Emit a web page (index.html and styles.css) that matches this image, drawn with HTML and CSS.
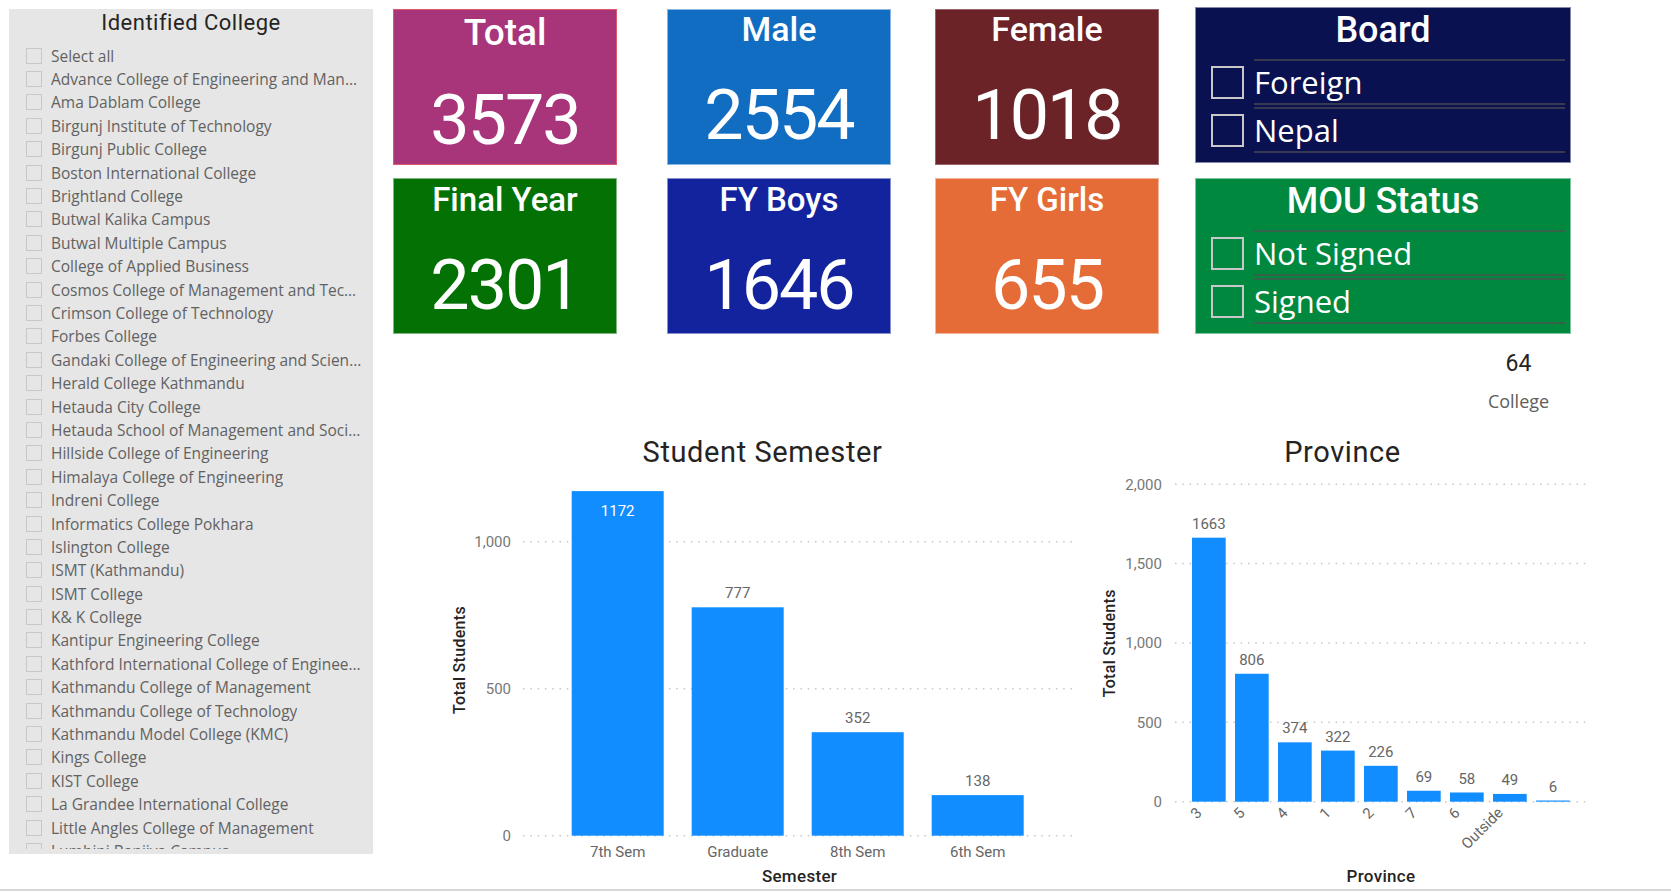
FILE: index.html
```html
<!DOCTYPE html>
<html lang="en">
<head>
    <meta charset="UTF-8">
    <meta name="viewport" content="width=device-width, initial-scale=1.0">
    <title>Student Dashboard</title>
    <link rel="stylesheet" href="styles.css">
</head>
<body>
    <div class="report">
        <!-- college slicer -->
        <aside class="college-slicer">
            <h2 class="slicer-heading">Identified College</h2>
            <ul class="college-list">
                <li><span class="box"></span><span class="name">Select all</span></li>
                <li><span class="box"></span><span class="name">Advance College of Engineering and Management</span></li>
                <li><span class="box"></span><span class="name">Ama Dablam College</span></li>
                <li><span class="box"></span><span class="name">Birgunj Institute of Technology</span></li>
                <li><span class="box"></span><span class="name">Birgunj Public College</span></li>
                <li><span class="box"></span><span class="name">Boston International College</span></li>
                <li><span class="box"></span><span class="name">Brightland College</span></li>
                <li><span class="box"></span><span class="name">Butwal Kalika Campus</span></li>
                <li><span class="box"></span><span class="name">Butwal Multiple Campus</span></li>
                <li><span class="box"></span><span class="name">College of Applied Business</span></li>
                <li><span class="box"></span><span class="name">Cosmos College of Management and Technology</span></li>
                <li><span class="box"></span><span class="name">Crimson College of Technology</span></li>
                <li><span class="box"></span><span class="name">Forbes College</span></li>
                <li><span class="box"></span><span class="name">Gandaki College of Engineering and Science</span></li>
                <li><span class="box"></span><span class="name">Herald College Kathmandu</span></li>
                <li><span class="box"></span><span class="name">Hetauda City College</span></li>
                <li><span class="box"></span><span class="name">Hetauda School of Management and Social Sciences</span></li>
                <li><span class="box"></span><span class="name">Hillside College of Engineering</span></li>
                <li><span class="box"></span><span class="name">Himalaya College of Engineering</span></li>
                <li><span class="box"></span><span class="name">Indreni College</span></li>
                <li><span class="box"></span><span class="name">Informatics College Pokhara</span></li>
                <li><span class="box"></span><span class="name">Islington College</span></li>
                <li><span class="box"></span><span class="name">ISMT (Kathmandu)</span></li>
                <li><span class="box"></span><span class="name">ISMT College</span></li>
                <li><span class="box"></span><span class="name">K&amp; K College</span></li>
                <li><span class="box"></span><span class="name">Kantipur Engineering College</span></li>
                <li><span class="box"></span><span class="name">Kathford International College of Engineering and Management</span></li>
                <li><span class="box"></span><span class="name">Kathmandu College of Management</span></li>
                <li><span class="box"></span><span class="name">Kathmandu College of Technology</span></li>
                <li><span class="box"></span><span class="name">Kathmandu Model College (KMC)</span></li>
                <li><span class="box"></span><span class="name">Kings College</span></li>
                <li><span class="box"></span><span class="name">KIST College</span></li>
                <li><span class="box"></span><span class="name">La Grandee International College</span></li>
                <li><span class="box"></span><span class="name">Little Angles College of Management</span></li>
                <li><span class="box"></span><span class="name">Lumbini Banijya Campus</span></li>
            </ul>
        </aside>

        <main class="canvas">
            <!-- cards + filters -->
            <section class="kpi-grid">
                <div class="kpi kpi-lg kpi-total">
                    <div class="kpi-title">Total</div>
                    <div class="kpi-value">3573</div>
                </div>
                <div class="kpi kpi-male">
                    <div class="kpi-title">Male</div>
                    <div class="kpi-value">2554</div>
                </div>
                <div class="kpi kpi-female">
                    <div class="kpi-title">Female</div>
                    <div class="kpi-value">1018</div>
                </div>
                <div class="filter filter-board">
                    <div class="filter-title">Board</div>
                    <div class="filter-option"><span class="filter-box"></span><span class="filter-label">Foreign</span></div>
                    <div class="filter-option"><span class="filter-box"></span><span class="filter-label">Nepal</span></div>
                </div>

                <div class="kpi kpi-sm kpi-final">
                    <div class="kpi-title">Final Year</div>
                    <div class="kpi-value">2301</div>
                </div>
                <div class="kpi kpi-sm kpi-boys">
                    <div class="kpi-title">FY Boys</div>
                    <div class="kpi-value">1646</div>
                </div>
                <div class="kpi kpi-sm kpi-girls">
                    <div class="kpi-title">FY Girls</div>
                    <div class="kpi-value">655</div>
                </div>
                <div class="filter filter-mou">
                    <div class="filter-title">MOU Status</div>
                    <div class="filter-option"><span class="filter-box"></span><span class="filter-label">Not Signed</span></div>
                    <div class="filter-option"><span class="filter-box"></span><span class="filter-label">Signed</span></div>
                </div>

                <div class="count-card">
                    <div class="count-value">64</div>
                    <div class="count-label">College</div>
                </div>
            </section>

            <!-- charts -->
            <section class="charts">
                <figure class="chart">
                    <h3 class="chart-title">Student Semester</h3>
                    <svg class="plot" width="645" height="422" viewBox="0 0 645 422">
                        <g class="grid">
                            <line x1="83" y1="74.7" x2="635" y2="74.7"/>
                            <line x1="83" y1="221.7" x2="635" y2="221.7"/>
                            <line x1="83" y1="368.7" x2="635" y2="368.7"/>
                        </g>
                        <g class="ticks">
                            <text x="71" y="80">1,000</text>
                            <text x="71" y="227">500</text>
                            <text x="71" y="374">0</text>
                        </g>
                        <g class="bars">
                            <rect x="131.7" y="24.1" width="92" height="344.6"/>
                            <rect x="251.7" y="140.3" width="92" height="228.4"/>
                            <rect x="371.7" y="265.2" width="92" height="103.5"/>
                            <rect x="491.7" y="328.1" width="92" height="40.6"/>
                        </g>
                        <g class="values">
                            <text class="inside" x="177.7" y="49">1172</text>
                            <text x="297.7" y="131">777</text>
                            <text x="417.7" y="256">352</text>
                            <text x="537.7" y="319">138</text>
                        </g>
                        <g class="categories">
                            <text x="177.7" y="390">7th Sem</text>
                            <text x="297.7" y="390">Graduate</text>
                            <text x="417.7" y="390">8th Sem</text>
                            <text x="537.7" y="390">6th Sem</text>
                        </g>
                        <text class="axis-title" x="359.5" y="414.5">Semester</text>
                        <text class="axis-title y-title" x="25" y="193" transform="rotate(-90 25 193)">Total Students</text>
                    </svg>
                </figure>

                <figure class="chart">
                    <h3 class="chart-title">Province</h3>
                    <svg class="plot" width="515" height="422" viewBox="0 0 515 422">
                        <g class="grid">
                            <line x1="90" y1="17.2" x2="502" y2="17.2"/>
                            <line x1="90" y1="96.6" x2="502" y2="96.6"/>
                            <line x1="90" y1="176" x2="502" y2="176"/>
                            <line x1="90" y1="255.3" x2="502" y2="255.3"/>
                            <line x1="90" y1="334.7" x2="502" y2="334.7"/>
                        </g>
                        <g class="ticks">
                            <text x="77" y="22.5">2,000</text>
                            <text x="77" y="101.9">1,500</text>
                            <text x="77" y="181.3">1,000</text>
                            <text x="77" y="260.6">500</text>
                            <text x="77" y="340">0</text>
                        </g>
                        <g class="bars">
                            <rect x="107" y="70.7" width="33.7" height="264"/>
                            <rect x="150" y="206.75" width="33.7" height="127.95"/>
                            <rect x="193" y="275.33" width="33.7" height="59.37"/>
                            <rect x="236" y="283.58" width="33.7" height="51.12"/>
                            <rect x="279" y="298.82" width="33.7" height="35.88"/>
                            <rect x="322" y="323.75" width="33.7" height="10.95"/>
                            <rect x="365" y="325.49" width="33.7" height="9.21"/>
                            <rect x="408" y="326.92" width="33.7" height="7.78"/>
                            <rect x="451" y="333.5" width="33.7" height="1.2"/>
                        </g>
                        <g class="values">
                            <text x="123.85" y="61.7">1663</text>
                            <text x="166.85" y="197.75">806</text>
                            <text x="209.85" y="266.3">374</text>
                            <text x="252.85" y="274.6">322</text>
                            <text x="295.85" y="289.8">226</text>
                            <text x="338.85" y="314.75">69</text>
                            <text x="381.85" y="316.5">58</text>
                            <text x="424.85" y="317.9">49</text>
                            <text x="467.85" y="324.5">6</text>
                        </g>
                        <g class="categories slanted">
                            <text x="117.85" y="346.7" transform="rotate(-45 117.85 346.7)">3</text>
                            <text x="160.85" y="346.7" transform="rotate(-45 160.85 346.7)">5</text>
                            <text x="203.85" y="346.7" transform="rotate(-45 203.85 346.7)">4</text>
                            <text x="246.85" y="346.7" transform="rotate(-45 246.85 346.7)">1</text>
                            <text x="289.85" y="346.7" transform="rotate(-45 289.85 346.7)">2</text>
                            <text x="332.85" y="346.7" transform="rotate(-45 332.85 346.7)">7</text>
                            <text x="375.85" y="346.7" transform="rotate(-45 375.85 346.7)">6</text>
                            <text x="418.85" y="346.7" transform="rotate(-45 418.85 346.7)">Outside</text>
                        </g>
                        <text class="axis-title" x="296" y="414.5">Province</text>
                        <text class="axis-title y-title" x="30" y="176.3" transform="rotate(-90 30 176.3)">Total Students</text>
                    </svg>
                </figure>
            </section>
        </main>
    </div>
</body>
</html>
```

FILE: styles.css
```css
* {
    padding: 0;
    margin: 0;
    box-sizing: border-box;
}
body {
    background-color: #fff;
    font-family: "Open Sans", "Noto Sans", sans-serif;
    overflow: hidden;
}
.report {
    display: flex;
    height: 891px;
    border-bottom: 2px solid #d8d8d8;
}

/* left slicer */
.college-slicer {
    flex: none;
    width: 364px;
    height: 845px;
    margin: 9px 0 0 9px;
    padding-top: 3px;
    background-color: #e6e6e6;
    overflow: hidden;
}
.slicer-heading {
    font: 400 22px/22px Roboto, sans-serif;
    letter-spacing: 0.5px;
    color: #252423;
    text-align: center;
}
.college-list {
    list-style: none;
    height: 805px;
    margin-top: 10px;
    overflow: hidden;
}
.college-list li {
    display: flex;
    align-items: center;
    height: 23.4px;
    padding: 0 11px 0 17px;
}
.box {
    flex: none;
    width: 16px;
    height: 16px;
    margin-right: 9px;
    border: 1px solid #c8c8c8;
}
.name {
    font-size: 15.5px;
    line-height: 22px;
    color: #626262;
    white-space: nowrap;
    overflow: hidden;
    text-overflow: ellipsis;
}

/* right side */
.canvas {
    flex: 1;
    margin-left: 20px;
}
.kpi-grid {
    display: grid;
    grid-template-columns: 274px 268px 260px 376px;
    grid-template-rows: 156px 156px auto;
    row-gap: 13px;
    padding-top: 9px;
}
.kpi {
    width: 224px;
    height: 156px;
    padding-top: 2px;
    border: 1px solid rgba(255, 255, 255, 0.5);
    color: #fff;
    text-align: center;
}
.kpi-title {
    font: 500 34px/34px Roboto, sans-serif;
}
.kpi-value {
    margin-top: 34px;
    font: 400 70px/70px Roboto, sans-serif;
    letter-spacing: -2px;
}
.kpi-lg {
    padding-top: 4px;
}
.kpi-lg .kpi-title {
    font-size: 37px;
    line-height: 37px;
}
.kpi-sm {
    padding-top: 4px;
}
.kpi-sm .kpi-title {
    font-size: 33px;
    line-height: 33px;
}
.kpi-total {
    background-color: #a8347a;
    border-color: #dc5a6c;
}
.kpi-male {
    background-color: #116dc2;
}
.kpi-female {
    background-color: #6b2328;
    border-color: rgba(255, 255, 255, 0.3);
}
.kpi-final {
    background-color: #037103;
}
.kpi-boys {
    background-color: #13239e;
}
.kpi-girls {
    background-color: #e66c37;
}

/* board / mou filters */
.filter {
    width: 376px;
    height: 156px;
    padding-top: 4px;
    border: 1px solid rgba(255, 255, 255, 0.5);
    color: #fff;
}
.filter-board {
    margin-top: -2px;
    background-color: #0a1150;
}
.filter-mou {
    background-color: #00883f;
}
.filter-title {
    margin-bottom: 11px;
    font: 500 36px/36px Roboto, sans-serif;
    text-align: center;
}
.filter-option {
    display: flex;
    align-items: center;
    margin: 0 5px 2px 15px;
}
.filter-box {
    flex: none;
    width: 33px;
    height: 33px;
    border: 2px solid #c8c8c8;
}
.filter-label {
    flex: 1;
    margin-left: 10px;
    border-top: 2px solid rgba(80, 80, 80, 0.65);
    border-bottom: 2px solid rgba(80, 80, 80, 0.65);
    font-size: 31px;
    line-height: 42px;
}

.count-card {
    grid-column: 4;
    justify-self: end;
    width: 105px;
    margin-top: 5px;
    text-align: center;
}
.count-value {
    font: 400 23px/23px Roboto, sans-serif;
    color: #252423;
}
.count-label {
    margin-top: 14px;
    font-size: 18px;
    line-height: 24px;
    color: #605e5c;
}

/* charts */
.charts {
    display: flex;
    margin: 25px 0 0 47px;
}
.chart {
    display: flex;
    flex-direction: column;
    align-items: center;
}
.chart-title {
    font: 400 29px/29px Roboto, sans-serif;
    letter-spacing: 0.6px;
    color: #252423;
}
.plot {
    display: block;
}
.grid line {
    stroke: #c8c8c8;
    stroke-width: 1.5;
    stroke-dasharray: 1.5 5.8;
}
.bars rect {
    fill: #118dff;
}
.ticks text {
    font: 400 15px Roboto, sans-serif;
    fill: #777;
    text-anchor: end;
}
.values text {
    font: 400 15px Roboto, sans-serif;
    fill: #666;
    text-anchor: middle;
}
.values .inside {
    fill: #fff;
}
.categories text {
    font: 400 15px Roboto, sans-serif;
    fill: #666;
    text-anchor: middle;
}
.slanted text {
    text-anchor: end;
}
.axis-title {
    font: 500 17px Roboto, sans-serif;
    letter-spacing: 0.3px;
    fill: #252423;
    text-anchor: middle;
}
.y-title {
    font-size: 16px;
}
```
